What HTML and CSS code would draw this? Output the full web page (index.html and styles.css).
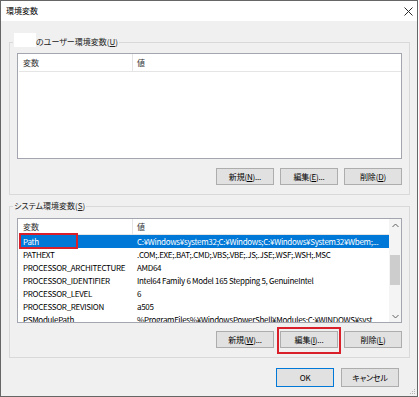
FILE: index.html
```html
<!DOCTYPE html>
<html lang="ja">
<head>
<meta charset="utf-8">
<title>環境変数</title>
<link rel="stylesheet" href="styles.css">
</head>
<body>
<div class="window">
  <div class="titlebar">
    <span class="title">環境変数</span>
    <svg class="close" width="9" height="9" viewBox="0 0 9 9"><path d="M0.5 0.5L8.5 8.5M8.5 0.5L0.5 8.5" stroke="#2b2b2b" stroke-width="1" fill="none"/></svg>
  </div>
  <div class="content">
    <fieldset class="group">
      <legend><span class="redact"></span>のユーザー環境変数(<u>U</u>)</legend>
      <div class="list list-user">
        <div class="list-main">
          <div class="list-head tall"><span class="cell name">変数</span><span class="cell val">値</span></div>
        </div>
      </div>
      <div class="btn-row">
        <button class="btn">新規(<u>N</u>)...</button>
        <button class="btn">編集(<u>E</u>)...</button>
        <button class="btn">削除(<u>D</u>)</button>
      </div>
    </fieldset>

    <fieldset class="group group-sys">
      <legend>システム環境変数(<u>S</u>)</legend>
      <div class="list list-sys">
        <div class="list-main">
          <div class="list-head"><span class="cell name">変数</span><span class="cell val">値</span></div>
          <div class="row sel"><span class="cell name">Path<span class="mark"></span></span><span class="cell val">C:¥Windows¥system32;C:¥Windows;C:¥Windows¥System32¥Wbem;...</span></div>
          <div class="row"><span class="cell name">PATHEXT</span><span class="cell val">.COM;.EXE;.BAT;.CMD;.VBS;.VBE;.JS;.JSE;.WSF;.WSH;.MSC</span></div>
          <div class="row"><span class="cell name">PROCESSOR_ARCHITECTURE</span><span class="cell val">AMD64</span></div>
          <div class="row"><span class="cell name">PROCESSOR_IDENTIFIER</span><span class="cell val">Intel64 Family 6 Model 165 Stepping 5, GenuineIntel</span></div>
          <div class="row"><span class="cell name">PROCESSOR_LEVEL</span><span class="cell val">6</span></div>
          <div class="row"><span class="cell name">PROCESSOR_REVISION</span><span class="cell val">a505</span></div>
          <div class="row"><span class="cell name">PSModulePath</span><span class="cell val">%ProgramFiles%¥WindowsPowerShell¥Modules;C:¥WINDOWS¥syst...</span></div>
        </div>
        <div class="scrollbar">
          <div class="sb-btn"><svg width="7" height="5" viewBox="0 0 7 5"><path d="M0.5 4L3.5 1L6.5 4" stroke="#606060" stroke-width="1" fill="none"/></svg></div>
          <div class="sb-track"><div class="sb-thumb"></div></div>
          <div class="sb-btn"><svg width="7" height="5" viewBox="0 0 7 5"><path d="M0.5 1L3.5 4L6.5 1" stroke="#606060" stroke-width="1" fill="none"/></svg></div>
        </div>
      </div>
      <div class="btn-row btn-row-sys">
        <button class="btn">新規(<u>W</u>)...</button>
        <button class="btn hl">編集(<u>I</u>)...</button>
        <button class="btn">削除(<u>L</u>)</button>
      </div>
    </fieldset>

    <div class="footer">
      <button class="btn btn-lg default">OK</button>
      <button class="btn btn-lg">キャンセル</button>
    </div>
  </div>
  <svg class="grip" width="6" height="6" viewBox="0 0 6 6">
    <rect x="4" y="0" width="1" height="1" fill="#b5b5b5"/>
    <rect x="2" y="2" width="1" height="1" fill="#b5b5b5"/>
    <rect x="4" y="2" width="1" height="1" fill="#b5b5b5"/>
    <rect x="0" y="4" width="1" height="1" fill="#b5b5b5"/>
    <rect x="2" y="4" width="1" height="1" fill="#b5b5b5"/>
    <rect x="4" y="4" width="1" height="1" fill="#b5b5b5"/>
  </svg>
</div>
</body>
</html>
```

FILE: styles.css
```css
* { box-sizing: border-box; }
html, body { margin: 0; padding: 0; }
body {
  background: #ffffff;
  font-family: "Noto Sans CJK JP", "Noto Sans", sans-serif;
  font-size: 8px;
  font-feature-settings: "palt";
  color: #000;
}
.window {
  width: 418px;
  height: 397px;
  border: 1px solid #666;
  background: #f0f0f0;
  display: flex;
  flex-direction: column;
  position: relative;
}
.titlebar {
  flex: none;
  height: 20px;
  background: #fff;
  display: flex;
  align-items: center;
  justify-content: space-between;
  padding: 0 4px 0 5px;
}
.title { line-height: 12px; color: #000; }
.close { display: block; }
.content {
  flex: 1;
  display: flex;
  flex-direction: column;
  padding: 15px 7px 0 8px;
}
.group {
  margin: 0;
  padding: 5px 7px 9px;
  border: 1px solid #d9d9d9;
  min-width: 0;
}
.group-sys { margin-top: 5px; padding-top: 6px; }
legend {
  padding: 0 1px;
  margin-left: -4px;
  line-height: 12px;
  height: 12px;
  color: #222;
  white-space: nowrap;
}
.redact {
  display: inline-block;
  width: 22px;
  height: 14px;
  background: #fff;
  vertical-align: top;
  margin-top: -3px;
  margin-bottom: 3px;
}
.list {
  display: flex;
  background: #fff;
  border: 1px solid #a3a6ae;
}
.list-user { height: 106px; }
.list-sys { height: 105px; }
.list-main {
  flex: 1;
  min-width: 0;
  padding-left: 1px;
  overflow: hidden;
}
.list-head {
  display: grid;
  grid-template-columns: 114px 1fr;
  height: 16px;
  border-bottom: 1px solid #e5e5e5;
  color: #333;
}
.list-head.tall { height: 18px; }
.cell {
  display: flex;
  align-items: center;
  padding-left: 4px;
  white-space: nowrap;
  overflow: hidden;
  line-height: 12px;
}
.list-head .name { border-right: 1px solid #e5e5e5; }
.row {
  display: grid;
  grid-template-columns: 114px 1fr;
  height: 13px;
  letter-spacing: -0.3px;
}
.row .name { position: relative; overflow: visible; }
.row.sel { background: #0078d7; color: #fff; }
.mark {
  position: absolute;
  left: 0;
  top: -2px;
  width: 59px;
  height: 16px;
  border: 2px solid #d9202a;
}
.scrollbar {
  flex: none;
  width: 12px;
  display: flex;
  flex-direction: column;
  background: #f4f4f4;
}
.sb-btn {
  height: 12px;
  display: flex;
  align-items: center;
  justify-content: center;
}
.sb-btn svg { display: block; }
.sb-track { flex: 1; padding: 24px 1px 0; }
.sb-thumb { height: 30px; background: #cdcdcd; }
.btn-row {
  display: flex;
  justify-content: flex-end;
  gap: 6px;
  margin-top: 9px;
}
.btn-row-sys { margin-top: 8px; }
.btn {
  width: 58px;
  height: 17px;
  padding: 0;
  margin: 0;
  background: #e1e1e1;
  border: 1px solid #adadad;
  font: inherit;
  font-feature-settings: inherit;
  color: #000;
  line-height: 12px;
  letter-spacing: -0.2px;
  display: flex;
  align-items: center;
  justify-content: center;
}
.btn-lg { height: 19px; }
.btn.default { border-color: #0078d7; }
.hl { position: relative; }
.hl::after {
  content: "";
  position: absolute;
  top: -5px;
  left: -4px;
  right: -4px;
  bottom: -7px;
  border: 2px solid #d9202a;
}
.footer {
  display: flex;
  justify-content: flex-end;
  gap: 7px;
  margin: 10px 11px 0 0;
}
.grip {
  position: absolute;
  right: 1px;
  bottom: 1px;
  display: block;
}
```
